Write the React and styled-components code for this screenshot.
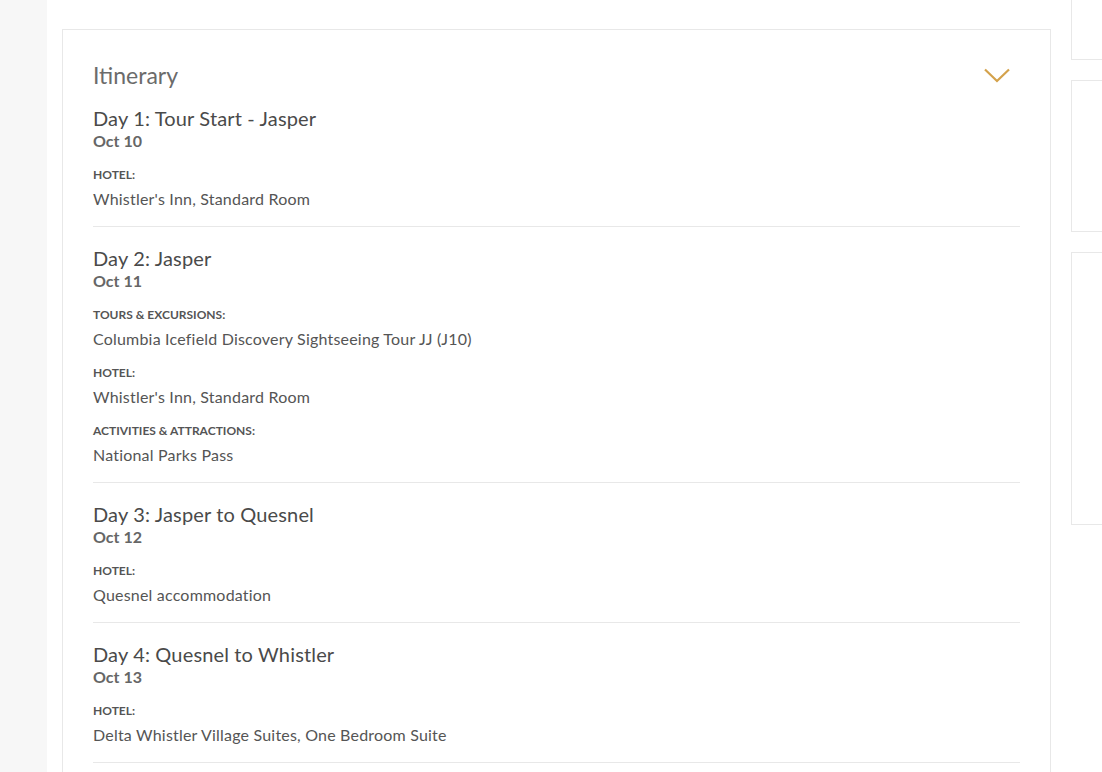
import React from "react";
import styled, { createGlobalStyle } from "styled-components";

const GlobalStyle = createGlobalStyle`
  html, body {
    margin: 0;
    padding: 0;
    background: #fff;
    font-family: Lato, "Open Sans", sans-serif;
    overflow: hidden;
  }
`;

const days = [
  {
    title: "Day 1: Tour Start - Jasper",
    date: "Oct 10",
    items: [{ label: "Hotel:", value: "Whistler's Inn, Standard Room" }],
  },
  {
    title: "Day 2: Jasper",
    date: "Oct 11",
    items: [
      {
        label: "Tours & Excursions:",
        value: "Columbia Icefield Discovery Sightseeing Tour JJ (J10)",
      },
      { label: "Hotel:", value: "Whistler's Inn, Standard Room" },
      { label: "Activities & Attractions:", value: "National Parks Pass" },
    ],
  },
  {
    title: "Day 3: Jasper to Quesnel",
    date: "Oct 12",
    items: [{ label: "Hotel:", value: "Quesnel accommodation" }],
  },
  {
    title: "Day 4: Quesnel to Whistler",
    date: "Oct 13",
    items: [
      { label: "Hotel:", value: "Delta Whistler Village Suites, One Bedroom Suite" },
    ],
  },
  {
    title: "Day 5: Whistler",
    date: "Oct 14",
    items: [
      { label: "Hotel:", value: "Delta Whistler Village Suites, One Bedroom Suite" },
    ],
  },
];

export default function App() {
  return (
    <>
      <GlobalStyle />
      <Page>
        <Sidebar />
        <Main>
          <Card>
            <Header>
              <Heading>Itinerary</Heading>
              <Chevron viewBox="0 0 26 15" aria-hidden="true">
                <path d="M1 1.5 L13 13 L25 1.5" />
              </Chevron>
            </Header>
            {days.map((day) => (
              <Day key={day.title}>
                <DayTitle>{day.title}</DayTitle>
                <DayDate>{day.date}</DayDate>
                {day.items.map((item) => (
                  <Item key={item.label}>
                    <Label>{item.label}</Label>
                    <Value>{item.value}</Value>
                  </Item>
                ))}
              </Day>
            ))}
          </Card>
        </Main>
        <Aside>
          <SideBox $h={100} />
          <SideBox $h={152} />
          <SideBox $h={273} />
        </Aside>
      </Page>
    </>
  );
}

const Page = styled.div`
  display: flex;
  align-items: flex-start;
  height: 772px;
  overflow: hidden;
`;

const Sidebar = styled.div`
  flex: 0 0 47px;
  align-self: stretch;
  background: #f7f7f7;
`;

const Main = styled.div`
  flex: 0 0 auto;
  padding: 29px 0 0 15px;
`;

const Card = styled.section`
  width: 927px;
  border: 1px solid #e8e8e8;
  padding: 32px 30px 30px 30px;
  background: #fff;
`;

const Header = styled.div`
  display: flex;
  align-items: center;
  justify-content: space-between;
  padding-right: 10px;
`;

const Heading = styled.h2`
  margin: 0;
  font-size: 23px;
  line-height: 26px;
  font-weight: 400;
  color: #6b6b6b;
`;

const Chevron = styled.svg`
  width: 26px;
  height: 15px;
  fill: none;
  stroke: #d4a24c;
  stroke-width: 2.2;
`;

const Day = styled.div`
  padding: 19px 0 16px;
  border-bottom: 1px solid #e8e8e8;

  & + & {
    padding-top: 20px;
  }
`;

const DayTitle = styled.h3`
  margin: 0;
  font-size: 20px;
  line-height: 22px;
  font-weight: 400;
  letter-spacing: 0.15px;
  color: #4a4a4a;
`;

const DayDate = styled.div`
  margin: 1px 0 2px;
  font-size: 16px;
  line-height: 22px;
  font-weight: 700;
  color: #666;
`;

const Item = styled.div`
  margin-top: 15px;
`;

const Label = styled.div`
  font-size: 12px;
  line-height: 16px;
  font-weight: 700;
  text-transform: uppercase;
  color: #555;
  margin-bottom: 5px;
`;

const Value = styled.div`
  font-size: 16px;
  line-height: 22px;
  letter-spacing: 0.2px;
  color: #555;
`;

const Aside = styled.aside`
  flex: 0 0 260px;
  margin-left: 20px;
  margin-top: -40px;
  display: flex;
  flex-direction: column;
  gap: 20px;
`;

const SideBox = styled.div`
  height: ${(p) => p.$h}px;
  box-sizing: border-box;
  border: 1px solid #e8e8e8;
  background: #fff;
`;
